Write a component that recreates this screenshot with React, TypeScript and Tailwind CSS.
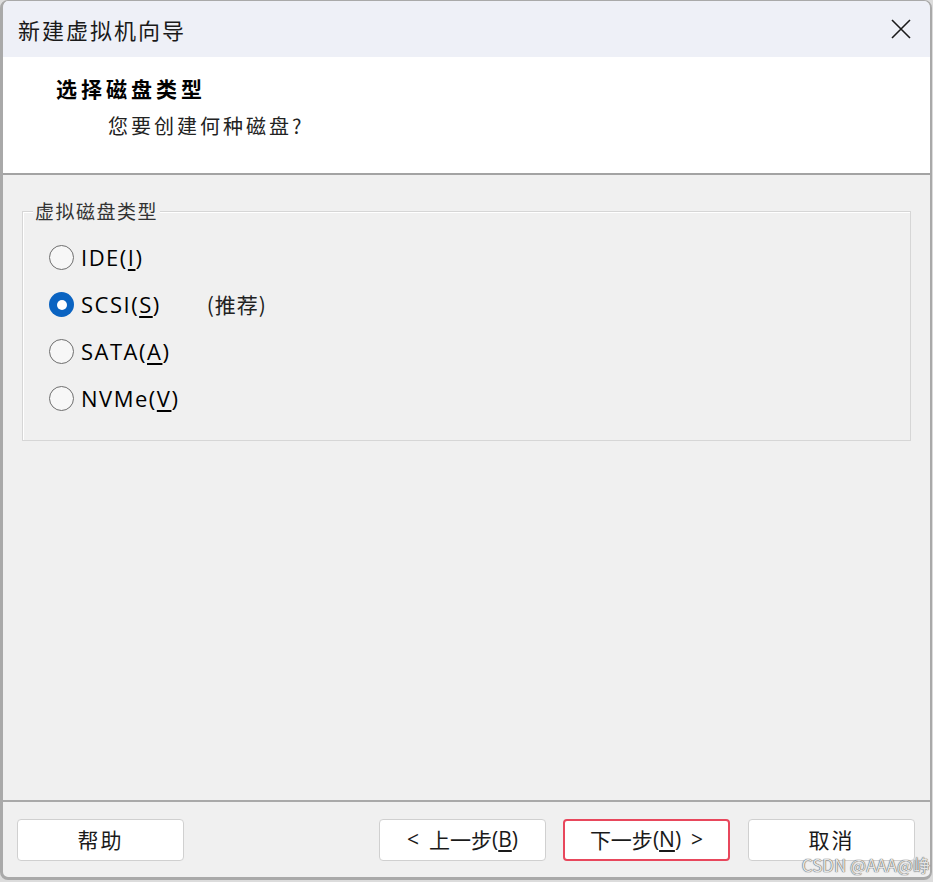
import React from 'react'

const SANS = "font-['Open_Sans','Noto_Sans_CJK_SC',sans-serif]"
const CJK = "font-['Noto_Sans_CJK_SC',sans-serif]"

const OPTIONS = [
  { name: 'IDE', key: 'I', checked: false },
  { name: 'SCSI', key: 'S', checked: true, note: '(推荐)' },
  { name: 'SATA', key: 'A', checked: false },
  { name: 'NVMe', key: 'V', checked: false },
]

function Radio({ checked }: { checked: boolean }) {
  if (checked) {
    return (
      <span className="w-[25px] h-[25px] rounded-full bg-[#0a63c1] flex items-center justify-center shrink-0">
        <span className="w-[10px] h-[10px] rounded-full bg-white" />
      </span>
    )
  }
  return <span className="w-[25px] h-[25px] rounded-full border border-[#6e6e6e] bg-[#f7f7f7] shrink-0" />
}

function Button({ children, highlight }: { children: React.ReactNode; highlight?: boolean }) {
  return (
    <button
      className={[
        'w-[167px] h-[42px] bg-white rounded-[4px] text-[21px] text-[#1a1a1a] flex items-center justify-center',
        CJK,
        highlight ? 'border-2 border-[#e8475c]' : 'border border-[#d0d0d0]',
      ].join(' ')}
    >
      {children}
    </button>
  )
}

export default function App() {
  return (
    <div className="w-[933px] h-[882px] bg-[#dcdcdc] relative overflow-hidden">
      <div className="w-[932px] h-[880px] flex flex-col bg-[#f0f0f0] border-l-[3px] border-r-2 border-b-[3px] border-t border-[#a9a9a9] rounded-[8px] overflow-hidden">
        {/* Title bar */}
        <div className="h-[56px] bg-[#eef0f7] flex items-center justify-between pl-[15px] pr-[18px] shrink-0">
          <span className={`text-[22px] tracking-[2px] text-[#1a1a1a] ${CJK}`}>新建虚拟机向导</span>
          <svg width="22" height="22" viewBox="0 0 22 22">
            <path d="M2 2 L20 20 M20 2 L2 20" stroke="#1a1a1a" strokeWidth="1.6" fill="none" />
          </svg>
        </div>

        {/* Header */}
        <div className="h-[118px] bg-white border-b-2 border-[#a3a3a3] shrink-0 pt-[16px]">
          <div className={`pl-[53px] text-[21px] font-bold tracking-[4px] text-black leading-[30px] ${CJK}`}>选择磁盘类型</div>
          <div className={`pl-[105px] mt-[8px] text-[20px] tracking-[3px] text-[#222] leading-[30px] ${CJK}`}>您要创建何种磁盘?</div>
        </div>

        {/* Body */}
        <div className="flex-1 pt-[36px] pl-[19px] pr-[19px]">
          <div className="relative h-[230px] border border-[#d6d6d6] shadow-[inset_1px_1px_0_#ffffff]">
            <span className={`absolute -top-[14px] left-[10px] bg-[#f0f0f0] px-[2px] text-[19px] tracking-[1.5px] text-[#333] leading-[26px] ${CJK}`}>
              虚拟磁盘类型
            </span>
            <div className="flex flex-col gap-[22px] pt-[33px] pl-[26px]">
              {OPTIONS.map((o) => (
                <div key={o.name} className="flex items-center h-[25px]">
                  <Radio checked={o.checked} />
                  <span className={`ml-[7px] text-[22px] tracking-[1.5px] text-black leading-[25px] ${SANS}`}>
                    {o.name}(<span className="underline underline-offset-[3px]">{o.key}</span>)
                  </span>
                  {o.note && (
                    <span className={`ml-[46px] text-[21px] tracking-[1px] text-[#222] ${CJK}`}>{o.note}</span>
                  )}
                </div>
              ))}
            </div>
          </div>
        </div>

        {/* Footer */}
        <div className="h-[77px] border-t-2 border-[#a9a9a9] shrink-0 flex items-start pt-[17px] pl-[14px] pr-[15px]">
          <Button>
            <span className="tracking-[2px]">帮助</span>
          </Button>
          <div className="flex-1" />
          <Button>
            <span className={SANS}>&lt;</span>
            <span className="ml-[10px]">上一步</span>
            <span className={SANS}>
              (<span className="underline underline-offset-[3px]">B</span>)
            </span>
          </Button>
          <div className="w-[17px]" />
          <Button highlight>
            <span>下一步</span>
            <span className={SANS}>
              (<span className="underline underline-offset-[3px]">N</span>)
            </span>
            <span className={`ml-[10px] ${SANS}`}>&gt;</span>
          </Button>
          <div className="w-[18px]" />
          <Button>
            <span className="tracking-[2px]">取消</span>
          </Button>
        </div>
      </div>

      <span
        className={`absolute right-[3px] bottom-[5px] text-[17px] text-[#e4e4e4] [text-shadow:0_0_1px_#555,0_0_1px_#555] ${CJK}`}
      >
        CSDN @AAA@峥
      </span>
    </div>
  )
}
